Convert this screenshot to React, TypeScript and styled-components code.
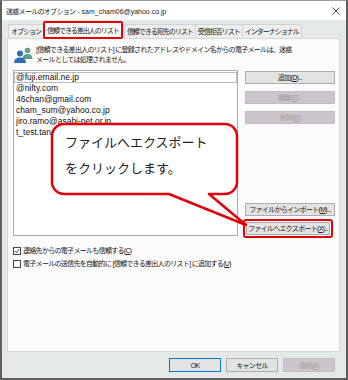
import React from "react";
import styled, { createGlobalStyle } from "styled-components";

const GlobalStyle = createGlobalStyle`
    html, body {
        margin: 0;
        padding: 0;
        background: #fff;
    }
    * {
        box-sizing: border-box;
    }
`;

const UI_FONT = `"Liberation Sans", "Noto Sans CJK JP", sans-serif`;
const RED = "#e3000b";

const emails = [
    "@fuji.email.ne.jp",
    "@nifty.com",
    "46chan@gmail.com",
    "cham_sum@yahoo.co.jp",
    "jiro.ramo@asahi-net.or.jp",
    "t_test.tanaka@example.jp",
];

const tabs = [
    "オプション",
    "信頼できる差出人のリスト",
    "信頼できる宛先のリスト",
    "受信拒否リスト",
    "インターナショナル",
];

const PeopleIcon = () => (
    <svg width="20" height="16" viewBox="0 0 20 16">
        <circle cx="14.5" cy="3.5" r="2.8" fill="#5f9e8c" />
        <path d="M9.5 12 Q9.5 7 14.5 7 Q19.5 7 19.5 12 Z" fill="#5f9e8c" />
        <circle cx="7" cy="6.5" r="3" fill="#2f6db3" />
        <path d="M1 16 Q1 10.5 7 10.5 Q13 10.5 13 16 Z" fill="#2f6db3" />
    </svg>
);

const CloseIcon = () => (
    <svg width="8" height="8" viewBox="0 0 8 8">
        <path d="M0.5 0.5 L7.5 7.5 M7.5 0.5 L0.5 7.5" stroke="#333" strokeWidth="0.9" />
    </svg>
);

const CheckMark = () => (
    <svg width="6" height="6" viewBox="0 0 6 6">
        <path d="M0.8 3 L2.4 4.6 L5.2 1.2" stroke="#222" strokeWidth="0.9" fill="none" />
    </svg>
);

export default function App() {
    return (
        <>
            <GlobalStyle />
            <Window>
                <TitleBar>
                    <span>
                        迷惑メールのオプション<Latin>&nbsp;-&nbsp;sam_cham06@yahoo.co.jp</Latin>
                    </span>
                    <CloseIcon />
                </TitleBar>
                <Body>
                    <TabBar>
                        {tabs.map((t, i) => (
                            <Tab key={t} $active={i === 1}>
                                {t}
                            </Tab>
                        ))}
                    </TabBar>
                    <Panel>
                        <InfoRow>
                            <PeopleIcon />
                            <InfoText>
                                [信頼できる差出人のリスト] に登録されたアドレスやドメイン名からの電子メールは、迷惑
                                <br />
                                メールとしては処理されません。
                            </InfoText>
                        </InfoRow>
                        <Main>
                            <ListBox>
                                {emails.map((e, i) => (
                                    <ListItem key={e} $focused={i === 0}>
                                        {e}
                                    </ListItem>
                                ))}
                            </ListBox>
                            <ButtonColumn>
                                <PushButton>
                                    追加(<u>D</u>)...
                                </PushButton>
                                <PushButton $disabled>
                                    編集(<u>E</u>)...
                                </PushButton>
                                <PushButton $disabled>
                                    削除(<u>R</u>)
                                </PushButton>
                                <BottomGroup>
                                    <PushButton>
                                        ファイルからインポート(<u>M</u>)...
                                    </PushButton>
                                    <Highlight>
                                        <PushButton>
                                            ファイルへエクスポート(<u>X</u>)...
                                        </PushButton>
                                    </Highlight>
                                </BottomGroup>
                            </ButtonColumn>
                        </Main>
                        <Options>
                            <OptionRow>
                                <CheckBox>
                                    <CheckMark />
                                </CheckBox>
                                <span>
                                    連絡先からの電子メールも信頼する(<u>C</u>)
                                </span>
                            </OptionRow>
                            <OptionRow>
                                <CheckBox />
                                <span>
                                    電子メールの送信先を自動的に [信頼できる差出人のリスト] に追加する(<u>U</u>)
                                </span>
                            </OptionRow>
                        </Options>
                    </Panel>
                    <Footer>
                        <FooterButton $primary>OK</FooterButton>
                        <FooterButton>キャンセル</FooterButton>
                        <FooterButton $disabled>
                            適用(<u>A</u>)
                        </FooterButton>
                    </Footer>
                </Body>

                <Callout>
                    <svg width="200" height="108" viewBox="0 0 200 108">
                        <path
                            d="M14 2 H175 A12 12 0 0 1 187 14 V60 A12 12 0 0 1 175 72 H159 L196 103 L119 72 H14 A12 12 0 0 1 2 60 V14 A12 12 0 0 1 14 2 Z"
                            fill="#fff"
                            stroke={RED}
                            strokeWidth="2.5"
                            strokeLinejoin="round"
                        />
                    </svg>
                    <CalloutText>
                        ファイルへエクスポート
                        <br />
                        をクリックします。
                    </CalloutText>
                </Callout>
            </Window>
        </>
    );
}

const Window = styled.div`
    position: relative;
    width: 348px;
    height: 380px;
    display: flex;
    flex-direction: column;
    background: #e4e8e8;
    border: 2px solid #5e5e5e;
    border-top: 1px solid #9a9a9a;
    font-family: ${UI_FONT};
    font-size: 7px;
    line-height: 11px;
    letter-spacing: -0.7px;
    color: #1a1a1a;
`;

const Latin = styled.span`
    letter-spacing: 0;
`;

const TitleBar = styled.div`
    height: 19px;
    flex: none;
    display: flex;
    align-items: center;
    justify-content: space-between;
    padding: 1px 6px 0 4px;
    background: #fff;
    white-space: nowrap;
`;

const Body = styled.div`
    flex: 1;
    display: flex;
    flex-direction: column;
    padding: 2px 6px 0 5px;
`;

const TabBar = styled.div`
    position: relative;
    z-index: 1;
    height: 17px;
    display: flex;
    align-items: flex-end;
    padding-left: 1px;
    margin-bottom: -1px;
`;

const Tab = styled.div<{ $active?: boolean }>`
    display: flex;
    align-items: center;
    white-space: nowrap;
    letter-spacing: -1px;
    padding: 0 2px;
    height: ${(p) => (p.$active ? "18px" : "14px")};
    margin-bottom: ${(p) => (p.$active ? "0" : "1px")};
    margin-right: ${(p) => (p.$active ? "1px" : "-1px")};
    background: ${(p) => (p.$active ? "#fbfbfb" : "#eceeee")};
    border: ${(p) => (p.$active ? `2px solid ${RED}` : "1px solid #cfd3d3")};
    border-bottom: ${(p) => (p.$active ? `2px solid ${RED}` : "none")};
    border-radius: ${(p) => (p.$active ? "2px" : "0")};
`;

const Panel = styled.div`
    flex: none;
    height: 314px;
    display: flex;
    flex-direction: column;
    background: #fbfbfb;
    border: 1px solid #d6d9d9;
    padding: 4px 4px 0 5px;
`;

const InfoRow = styled.div`
    height: 23px;
    display: flex;
    align-items: flex-start;
    gap: 3px;

    svg {
        margin-top: 4px;
        flex: none;
    }
`;

const InfoText = styled.div`
    white-space: nowrap;
    padding-top: 2px;
    line-height: 10px;
`;

const Main = styled.div`
    margin-top: 4px;
    height: 166px;
    display: grid;
    grid-template-columns: 225px 90px;
    gap: 7px;
`;

const ListBox = styled.div`
    background: #fff;
    border: 1px solid #a9acb0;
    padding-top: 1px;
    overflow: hidden;
    font-family: "Liberation Sans", sans-serif;
    font-size: 8.5px;
    line-height: 11px;
    letter-spacing: 0;
    color: #111;
`;

const ListItem = styled.div<{ $focused?: boolean }>`
    height: 11px;
    padding: 0 2px;
    white-space: nowrap;
    box-shadow: ${(p) => (p.$focused ? "inset 0 0 0 1px #b9bcbf" : "none")};
`;

const ButtonColumn = styled.div`
    display: flex;
    flex-direction: column;
    gap: 7px;
    padding-top: 1px;
`;

const BottomGroup = styled.div`
    margin-top: auto;
    margin-bottom: -2px;
    display: flex;
    flex-direction: column;
    gap: 3px;
`;

const PushButton = styled.div<{ $disabled?: boolean }>`
    height: 13px;
    display: flex;
    align-items: center;
    justify-content: center;
    white-space: nowrap;
    background: ${(p) => (p.$disabled ? "#ccc5cc" : "#e3e3e3")};
    border: 1px solid ${(p) => (p.$disabled ? "#c2bbc2" : "#adadad")};
    color: ${(p) => (p.$disabled ? "#a39da4" : "#1a1a1a")};
`;

const Highlight = styled.div`
    margin-left: -2px;
    width: 90px;
    padding: 1px;
    border: 2px solid ${RED};
    border-radius: 3px;
`;

const Options = styled.div`
    margin-top: 9px;
    display: flex;
    flex-direction: column;
    gap: 2px;
`;

const OptionRow = styled.div`
    height: 11px;
    display: flex;
    align-items: center;
    gap: 1px;
    white-space: nowrap;
`;

const CheckBox = styled.div`
    width: 8px;
    height: 8px;
    flex: none;
    display: flex;
    align-items: center;
    justify-content: center;
    margin-right: 1px;
    background: #fff;
    border: 1px solid #444;
`;

const Footer = styled.div`
    flex: 1;
    display: flex;
    justify-content: flex-end;
    align-items: flex-start;
    gap: 5px;
    padding: 6px 5px 0 0;
`;

const FooterButton = styled.div<{ $primary?: boolean; $disabled?: boolean }>`
    width: 52px;
    height: 14px;
    display: flex;
    align-items: center;
    justify-content: center;
    white-space: nowrap;
    background: ${(p) => (p.$disabled ? "#ccc5cc" : "#e3e3e3")};
    border: 1px solid
        ${(p) => (p.$primary ? "#0078d7" : p.$disabled ? "#c2bbc2" : "#adadad")};
    color: ${(p) => (p.$disabled ? "#a39da4" : "#1a1a1a")};
`;

const Callout = styled.div`
    position: absolute;
    left: 48px;
    top: 121px;
    width: 200px;
    height: 108px;
    z-index: 5;

    svg {
        display: block;
    }
`;

const CalloutText = styled.div`
    position: absolute;
    left: 15px;
    top: 8px;
    font-family: "Liberation Sans", "Noto Sans CJK JP", sans-serif;
    font-size: 13px;
    line-height: 26px;
    letter-spacing: 0;
    white-space: nowrap;
    color: #222;
`;
